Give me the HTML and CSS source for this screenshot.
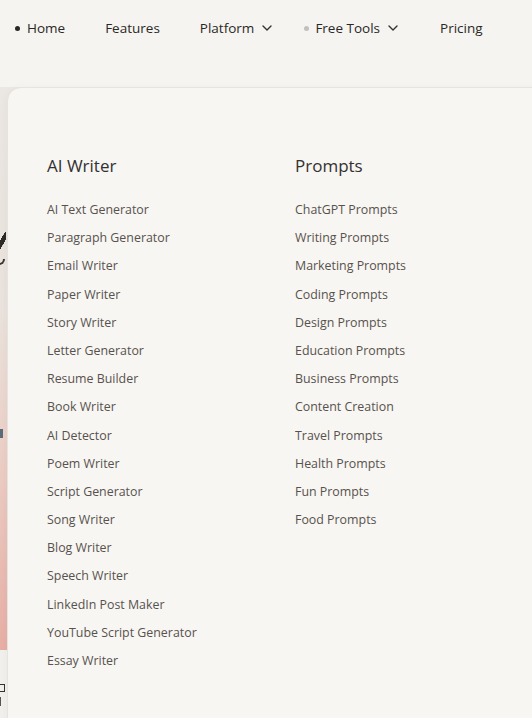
FILE: index.html
```html
<!DOCTYPE html>
<html lang="en">
<head>
<meta charset="utf-8">
<title>Menu</title>
<link rel="stylesheet" href="styles.css">
</head>
<body>
<nav class="nav">
  <a class="nav-item active"><span class="dot"></span>Home</a>
  <a class="nav-item">Features</a>
  <a class="nav-item">Platform<svg class="chev" viewBox="0 0 10 6"><path d="M1 1l4 4 4-4"/></svg></a>
  <a class="nav-item open"><span class="dot gray"></span>Free Tools<svg class="chev" viewBox="0 0 10 6"><path d="M1 1l4 4 4-4"/></svg></a>
  <a class="nav-item last">Pricing</a>
</nav>

<main class="page">
  <section class="hero">
    <span class="glyph g1"></span>
    <span class="glyph g2"></span>
    <span class="glyph g3"></span>
  </section>
  <div class="below">
    <span class="glyph g4"></span>
    <span class="glyph g5"></span>
  </div>
</main>

<div class="dropdown">
  <div class="col">
    <h2 class="col-title">AI Writer</h2>
    <ul class="links">
      <li>AI Text Generator</li>
      <li>Paragraph Generator</li>
      <li>Email Writer</li>
      <li>Paper Writer</li>
      <li>Story Writer</li>
      <li>Letter Generator</li>
      <li>Resume Builder</li>
      <li>Book Writer</li>
      <li>AI Detector</li>
      <li>Poem Writer</li>
      <li>Script Generator</li>
      <li>Song Writer</li>
      <li>Blog Writer</li>
      <li>Speech Writer</li>
      <li>LinkedIn Post Maker</li>
      <li>YouTube Script Generator</li>
      <li>Essay Writer</li>
    </ul>
  </div>
  <div class="col">
    <h2 class="col-title">Prompts</h2>
    <ul class="links">
      <li>ChatGPT Prompts</li>
      <li>Writing Prompts</li>
      <li>Marketing Prompts</li>
      <li>Coding Prompts</li>
      <li>Design Prompts</li>
      <li>Education Prompts</li>
      <li>Business Prompts</li>
      <li>Content Creation</li>
      <li>Travel Prompts</li>
      <li>Health Prompts</li>
      <li>Fun Prompts</li>
      <li>Food Prompts</li>
    </ul>
  </div>
</div>
</body>
</html>
```

FILE: styles.css
```css
* { box-sizing: border-box; }
html, body { margin: 0; padding: 0; }
body {
  width: 532px;
  height: 718px;
  overflow: hidden;
  position: relative;
  background: #f5f4f0;
  font-family: "Open Sans", "Noto Sans", sans-serif;
  color: #222;
}

.nav {
  display: flex;
  align-items: center;
  height: 56px;
  padding-left: 15px;
  gap: 40px;
}
.nav-item {
  display: flex;
  align-items: center;
  font-size: 13.5px;
  font-weight: 500;
  color: #2a2826;
  text-decoration: none;
  white-space: nowrap;
}
.dot {
  width: 5px;
  height: 5px;
  border-radius: 50%;
  background: #2a2826;
  margin-right: 7px;
}
.dot.gray { background: #c2c0bc; }
.nav-item.open { margin-left: -8px; }
.nav-item.open .dot { margin-right: 6px; }
.nav-item.last { margin-left: 2px; }
.chev {
  width: 10px;
  height: 6px;
  margin-left: 8px;
  fill: none;
  stroke: #333;
  stroke-width: 1.4;
  stroke-linecap: round;
  stroke-linejoin: round;
}

.page { padding-top: 31px; }
.hero {
  position: relative;
  height: 563px;
  margin-right: 20px;
  background: linear-gradient(180deg, #ebe7e3 0%, #eae2dc 40%, #ebcfc6 65%, #e7aea5 100%);
}
.below {
  position: relative;
  height: 70px;
  background: #f1f0ed;
  margin-right: 20px;
}
.glyph { position: absolute; left: 0; display: block; }
.g1 { top: 145px; width: 6px; height: 18px; background: linear-gradient(120deg, transparent 30%, #2e2a28 31%, #2e2a28 62%, transparent 63%); }
.g2 { top: 172px; width: 6px; height: 6px; border-bottom: 2px solid #3a3532; border-right: 2px solid #3a3532; border-radius: 0 0 6px 0; left: -1px; }
.g3 { top: 342px; width: 3px; height: 9px; background: #5b6b78; }
.g4 { top: 34px; width: 5px; height: 8px; border: 1.5px solid #333; border-left: none; }
.g5 { top: 47px; width: 5px; height: 9px; border-left: 1.5px solid #555; }

.dropdown {
  position: absolute;
  left: 7px;
  top: 87px;
  right: -30px;
  bottom: -30px;
  background: #f7f6f3;
  border: 1px solid #e6e4df;
  border-radius: 14px;
  box-shadow: 0 2px 10px rgba(0,0,0,0.04);
  display: grid;
  grid-template-columns: 248px 1fr;
  padding: 66px 0 0 39px;
  align-content: start;
}
.col-title {
  margin: 0 0 18px;
  font-size: 17px;
  line-height: 24px;
  font-weight: 400;
  color: #333130;
}
.links {
  list-style: none;
  margin: 0;
  padding: 0;
}
.links li {
  height: 28.2px;
  line-height: 28.2px;
  font-size: 12.4px;
  font-weight: 500;
  color: #57524d;
  white-space: nowrap;
}
```
